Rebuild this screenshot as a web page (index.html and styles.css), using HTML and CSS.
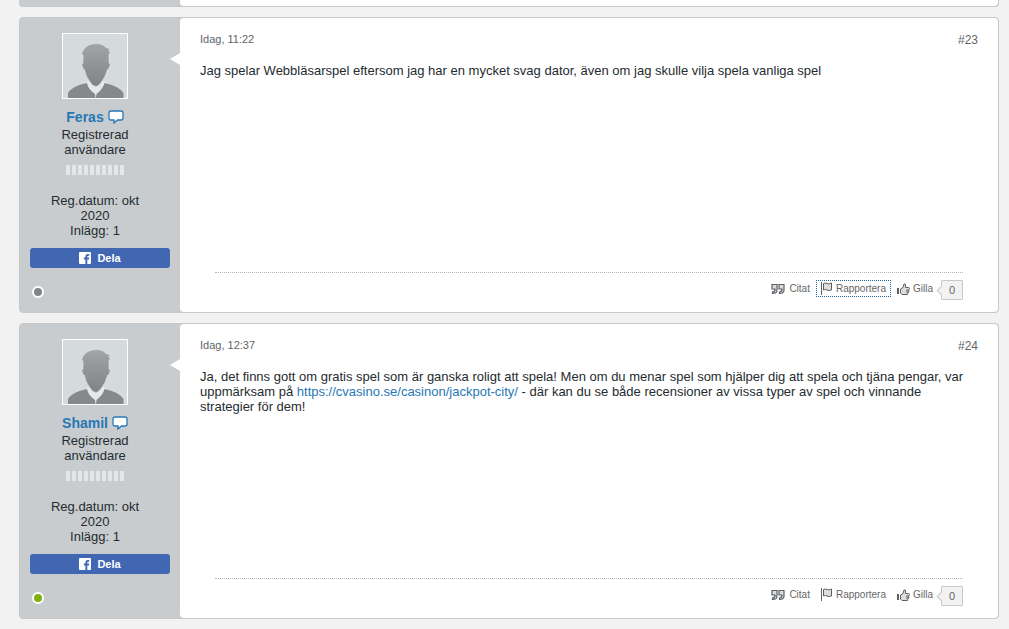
FILE: index.html
```
<!DOCTYPE html>
<html lang="sv">
<head>
  <meta charset="UTF-8">
  <meta name="viewport" content="width=device-width, initial-scale=1">
  <title>Forum</title>
  <link rel="stylesheet" href="styles.css">
</head>
<body>
  <svg class="sprite" aria-hidden="true">
    <defs>
      <linearGradient id="skin" x1="0" y1="0" x2="0" y2="1">
        <stop offset="0" stop-color="#a2a4a6"/>
        <stop offset="1" stop-color="#808385"/>
      </linearGradient>
    </defs>
    <symbol id="avatar" viewBox="0 0 64 64">
      <path fill="#d5dadd" d="M0 0h64v64H0z"/>
      <path fill="#e6e9eb" d="M25 47L22 50 32 64h2L44 50 41 47z"/>
      <path fill="url(#skin)" stroke="#e3e6e8" stroke-width=".6" d="M20 29V21L18.500 20Q20 14 25 11.500Q33 8 40 11L43 13.500Q46 14 48 16.500L45.500 16.500Q47.500 18 47.500 20.500L46 19.500V29Q48 30 46.500 33Q46 35 44.500 35.500Q43 42 38.500 48Q35 52.500 33 52.500Q30 52.500 27 48Q22.500 42 21.500 35.500Q20 35 19.500 33Q18 30 20 29z"/>
      <path fill="#86898b" d="M5 64V59Q9 52 24 49Q25 55 32 60L32.500 64zM33 64L33.500 60Q40 55 41.500 49Q56 52 60.500 59V64z"/>
    </symbol>
    <symbol id="chat" viewBox="0 0 16 14">
      <path fill="#fff" stroke="#2777b5" stroke-width="1.3" d="M3 1h10q2 0 2 2v5q0 2-2 2h-3.500L6 13V10H3Q1 10 1 8V3q0-2 2-2z"/>
    </symbol>
    <symbol id="fb" viewBox="0 0 12 12">
      <path fill="#fff" d="M1 0h10q1 0 1 1v10q0 1-1 1H8.300V7.500h1.600l.3-1.900H8.300V4.500q0-.8.900-.8h1V2.100H8.700Q6.400 2.100 6.400 4.300v1.300H4.900v1.900h1.500V12H1q-1 0-1-1V1q0-1 1-1z"/>
    </symbol>
    <symbol id="quote" viewBox="0 0 14 12">
      <path fill="#ddd" stroke="#5c6064" stroke-width="1.200" d="M1 1.500H6V7Q6 10.500 1.500 10.500V9Q4 9 4 6H1zM8 1.500H13V7Q13 10.500 8.500 10.500V9Q11 9 11 6H8z"/>
    </symbol>
    <symbol id="flag" viewBox="0 0 12 13">
      <path fill="#5c6064" d="M0 0h1v13H0z"/>
      <path fill="#ddd" stroke="#5c6064" d="M2.500 1.500q2-1 3.500 0t4.500-.5v7q-3 1-4.500 0t-3.500 0z"/>
    </symbol>
    <symbol id="thumb" viewBox="0 0 13 12">
      <path fill="#5c6064" d="M0 5h2v6H0z"/>
      <path fill="#ddd" stroke="#5c6064" d="M3.500 6L6 4.500 7 1q1.500-.5 1.500 1V4.500h3q1 0 1 1t-1 1.500q1 1 0 2t-1 2.500H5L3.500 10z"/>
      <path stroke="#5c6064" d="M9 7h3M9 9h2.500"/>
    </symbol>
  </svg>

  <main class="posts">
    <div class="post post-end">
      <div class="userinfo"></div>
      <div class="content"></div>
    </div>

    <article class="post">
      <aside class="userinfo">
        <div class="user">
          <svg class="avatar" role="img" aria-label="Feras"><use href="#avatar"/></svg>
          <a class="name" href="#">Feras <svg class="chat"><use href="#chat"/></svg></a>
          <p>Registrerad användare</p>
          <div class="reputation"></div>
          <p>Reg.datum: okt 2020</p>
          <p>Inlägg: 1</p>
        </div>
        <button class="share" type="button"><svg><use href="#fb"/></svg>Dela</button>
        <span class="status"></span>
      </aside>
      <div class="content">
        <header class="post-head">
          <time>Idag, 11:22</time>
          <a href="#">#23</a>
        </header>
        <div class="message">Jag spelar Webbläsarspel eftersom jag har en mycket svag dator, även om jag skulle vilja spela vanliga spel</div>
        <footer class="controls">
          <button class="quote" type="button"><svg><use href="#quote"/></svg>Citat</button>
          <button class="report focused" type="button"><svg><use href="#flag"/></svg>Rapportera</button>
          <button class="like" type="button"><svg><use href="#thumb"/></svg>Gilla</button>
          <button class="votes" type="button">0</button>
        </footer>
      </div>
    </article>

    <article class="post">
      <aside class="userinfo">
        <div class="user">
          <svg class="avatar" role="img" aria-label="Shamil"><use href="#avatar"/></svg>
          <a class="name" href="#">Shamil <svg class="chat"><use href="#chat"/></svg></a>
          <p>Registrerad användare</p>
          <div class="reputation"></div>
          <p>Reg.datum: okt 2020</p>
          <p>Inlägg: 1</p>
        </div>
        <button class="share" type="button"><svg><use href="#fb"/></svg>Dela</button>
        <span class="status online"></span>
      </aside>
      <div class="content">
        <header class="post-head">
          <time>Idag, 12:37</time>
          <a href="#">#24</a>
        </header>
        <div class="message">Ja, det finns gott om gratis spel som är ganska roligt att spela! Men om du menar spel som hjälper dig att spela och tjäna pengar, var uppmärksam på <a href="https://cvasino.se/casinon/jackpot-city/">https://cvasino.se/casinon/jackpot-city/</a> - där kan du se både recensioner av vissa typer av spel och vinnande strategier för dem!</div>
        <footer class="controls">
          <button class="quote" type="button"><svg><use href="#quote"/></svg>Citat</button>
          <button class="report" type="button"><svg><use href="#flag"/></svg>Rapportera</button>
          <button class="like" type="button"><svg><use href="#thumb"/></svg>Gilla</button>
          <button class="votes" type="button">0</button>
        </footer>
      </div>
    </article>
  </main>
</body>
</html>
```
FILE: styles.css
```
* { margin: 0; padding: 0; box-sizing: border-box; }
body {
  font-family: "Liberation Sans", Arial, sans-serif;
  font-size: 13px;
  line-height: 15px;
  color: #252c2f;
  background: #f2f2f2;
}
a { color: #2777b5; text-decoration: none; }
button { font-family: inherit; cursor: pointer; }
.sprite {
  position: absolute;
  width: 0;
  height: 0;
}
.posts {
  display: flex;
  flex-direction: column;
  gap: 10px;
  padding: 0 10px 10px 19px;
}

/* post */
.post {
  display: flex;
  border: 1px solid #c8c8c8;
  border-radius: 4px;
  background: #c8cccf;
}
.post-end {
  border-top: none;
  border-radius: 0 0 4px 4px;
}
.post-end .content {
  padding: 0 0 6px;
  border-radius: 0 0 4px 4px;
}
.post-end .content::before { display: none; }
.post-end .userinfo { padding: 0; }

/* left column */
.userinfo {
  flex: 0 0 160px;
  display: flex;
  flex-direction: column;
  padding: 15px 10px 14px;
}
.user {
  width: 110px;
  margin-left: 10px;
  text-align: center;
}
.avatar {
  display: block;
  width: 66px;
  height: 66px;
  margin: 0 auto 10px;
  border: 1px solid #fff;
}
.name {
  display: flex;
  justify-content: center;
  align-items: center;
  gap: 4px;
  padding-bottom: 2px;
  font-size: 14px;
  font-weight: bold;
  line-height: 16px;
}
.chat {
  width: 16px;
  height: 14px;
}
.reputation {
  width: 59px;
  height: 10px;
  margin: 8px auto 18px;
  background: repeating-linear-gradient(90deg, #e4e7e9 0 4px, transparent 4px 6px);
}
.share {
  display: flex;
  justify-content: center;
  align-items: center;
  gap: 6px;
  height: 20px;
  margin-top: 10px;
  border: none;
  border-radius: 3px;
  background: #4267b2;
  color: #fff;
  font-size: 11px;
  font-weight: bold;
}
.share svg {
  width: 12px;
  height: 12px;
}
.status {
  width: 12px;
  height: 12px;
  margin: auto 0 0 2px;
  border: 2px solid #fff;
  border-radius: 50%;
  background: #7f8487;
}
.online { background: #80b10b; }

/* right column */
.content {
  position: relative;
  flex: 1;
  display: flex;
  flex-direction: column;
  padding: 14px 20px 12px;
  border-radius: 4px;
  background: #fff;
}
.content::before {
  content: "";
  position: absolute;
  top: 35px;
  left: -10px;
  border: solid transparent;
  border-width: 6px 10px 6px 0;
  border-right-color: #fff;
}
.post-head {
  display: flex;
  justify-content: space-between;
  margin-bottom: 15px;
  color: #5f6468;
}
.post-head time { font-size: 11px; }
.post-head a {
  padding-top: 1px;
  color: #5f6468;
  font-size: 12px;
}
.message {
  flex: 1;
  min-height: 209px;
}
.controls {
  display: flex;
  justify-content: flex-end;
  align-items: flex-start;
  margin: 0 15px;
  padding-top: 7px;
  border-top: 1px dotted #b5b5b5;
}
.controls button {
  display: flex;
  align-items: center;
  height: 17px;
  border: 1px solid transparent;
  background: none;
  color: #666;
  font-size: 10px;
}
.quote svg {
  width: 14px;
  height: 12px;
  margin-right: 4px;
}
.report svg {
  width: 12px;
  height: 13px;
  margin-right: 3px;
}
.like svg {
  width: 13px;
  height: 12px;
  margin-right: 3px;
}
.controls .report {
  margin: 0 5px;
  padding: 0 4px;
}
.controls .focused { border: 1px dotted #22629a; }
.controls .votes {
  position: relative;
  justify-content: center;
  width: 22px;
  height: 20px;
  margin-left: 7px;
  border: 1px solid #c8c8c8;
  border-radius: 1px;
  background: #f2f2f2;
  font-size: 11px;
}
.votes::before {
  content: "";
  position: absolute;
  top: 6px;
  left: -4px;
  width: 6px;
  height: 6px;
  border: solid #c8c8c8;
  border-width: 0 0 1px 1px;
  background: #f2f2f2;
  transform: rotate(45deg);
}
```
